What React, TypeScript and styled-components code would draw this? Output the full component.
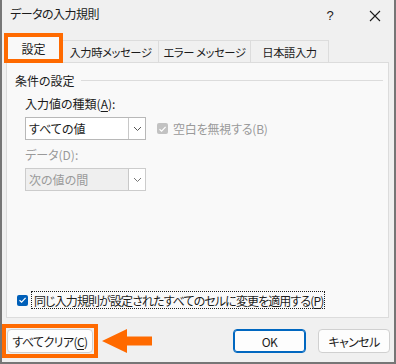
import React from "react";
import styled, { createGlobalStyle } from "styled-components";

const Global = createGlobalStyle`
  html, body { margin: 0; padding: 0; background: #f0f0f0; }
  body {
    font-family: "Noto Sans CJK JP", "Noto Sans", sans-serif;
    font-size: 12px;
    font-feature-settings: "palt";
    color: #1b1b1b;
  }
  * { box-sizing: border-box; }
`;

const Window = styled.div`
  width: 396px;
  height: 364px;
  background: #f0f0f0;
  border: 2px solid #767676;
  border-top: none;
  display: flex;
  flex-direction: column;
`;

const TitleBar = styled.div`
  height: 33px;
  display: flex;
  align-items: flex-start;
  padding: 6px 0 0 8px;
  line-height: 16px;
`;

const Title = styled.div`
  flex: 1;
  font-size: 12px;
  letter-spacing: -0.5px;
`;

const TitleButton = styled.div<{ $w: number }>`
  width: ${(p) => p.$w}px;
  height: 20px;
  display: flex;
  align-items: center;
  justify-content: center;
  color: #1b1b1b;
`;

const Help = styled.span`
  font-family: "Liberation Sans", sans-serif;
  font-size: 13px;
`;

const Gap = styled.div<{ $w: number }>`
  width: ${(p) => p.$w}px;
  flex: none;
`;

const TabRow = styled.div`
  display: flex;
  align-items: flex-end;
  height: 29px;
  padding-left: 2px;
  position: relative;
  z-index: 1;
`;

const Tab = styled.div<{ $w: number }>`
  width: ${(p) => p.$w}px;
  height: 22px;
  border: 1px solid #dcdcdc;
  border-bottom: none;
  border-left: none;
  display: flex;
  align-items: center;
  justify-content: center;
  background: #f0f0f0;
  white-space: nowrap;
  font-size: 11.3px;
  letter-spacing: -0.4px;
`;

const ActiveTab = styled.div`
  width: 59px;
  height: 30px;
  margin-bottom: -1px;
  border: 4px solid #ff6a00;
  background: #f9f9f9;
  display: flex;
  align-items: center;
  justify-content: center;
`;

const Panel = styled.div`
  margin: 0 5px 0 4px;
  height: 256px;
  background: #f9f9f9;
  border: 1px solid #dcdcdc;
  display: flex;
  flex-direction: column;
  padding: 9px 5px 8px 8px;
`;

const GroupHead = styled.div`
  display: flex;
  align-items: center;
  height: 16px;
`;

const GroupLine = styled.div`
  flex: 1;
  height: 1px;
  background: #dcdcdc;
  margin-left: 6px;
`;

const Content = styled.div`
  padding-left: 10px;
  display: flex;
  flex-direction: column;
`;

const FieldLabel = styled.div<{ $disabled?: boolean; $top: number }>`
  margin-top: ${(p) => p.$top}px;
  height: 14px;
  line-height: 14px;
  color: ${(p) => (p.$disabled ? "#9a9a9a" : "#1b1b1b")};
`;

const Row = styled.div<{ $top: number }>`
  margin-top: ${(p) => p.$top}px;
  display: flex;
  align-items: center;
`;

const Combo = styled.div<{ $disabled?: boolean }>`
  width: 121px;
  height: 23px;
  border: 1px solid ${(p) => (p.$disabled ? "#cccccc" : "#b8b8b8")};
  background: ${(p) => (p.$disabled ? "#efefef" : "#ffffff")};
  display: flex;
  color: ${(p) => (p.$disabled ? "#9a9a9a" : "#1b1b1b")};
`;

const ComboText = styled.div`
  flex: 1;
  padding-left: 3px;
  display: flex;
  align-items: center;
`;

const ComboButton = styled.div`
  width: 17px;
  border-left: 1px solid #c8c8c8;
  background: #ffffff;
  display: flex;
  align-items: center;
  justify-content: center;
`;

const Check = styled.div<{ $color: string; $left?: number }>`
  width: 11px;
  height: 11px;
  margin-left: ${(p) => p.$left ?? 0}px;
  border-radius: 2px;
  background: ${(p) => p.$color};
  display: flex;
  align-items: center;
  justify-content: center;
  flex: none;
`;

const CheckLabel = styled.div<{ $disabled?: boolean; $gap: number }>`
  margin-left: ${(p) => p.$gap}px;
  color: ${(p) => (p.$disabled ? "#9a9a9a" : "#1b1b1b")};
  white-space: nowrap;
  letter-spacing: -0.2px;
`;

const Spacer = styled.div`
  flex: 1;
`;

const ApplyRow = styled.div`
  display: flex;
  align-items: center;
  padding-left: 2px;
`;

const Focus = styled.div`
  margin-left: 3px;
  height: 18px;
  padding: 0 1px 0 2px;
  border: 1px dotted #1b1b1b;
  display: flex;
  align-items: center;
  white-space: nowrap;
  letter-spacing: -0.9px;
`;

const Footer = styled.div`
  display: flex;
  align-items: center;
  margin-top: 6px;
  padding-right: 4px;
`;

const Highlight = styled.div`
  border: 4px solid #ff6a00;
  padding: 1px;
  background: #f0f0f0;
`;

const Button = styled.div<{ $w: number; $primary?: boolean }>`
  width: ${(p) => p.$w}px;
  height: 24px;
  border-radius: 4px;
  background: #fdfdfd;
  border: 1px solid ${(p) => (p.$primary ? "#0067c0" : "#d0d0d0")};
  box-shadow: ${(p) => (p.$primary ? "inset 0 0 0 1px #0067c0" : "none")};
  display: flex;
  align-items: center;
  justify-content: center;
  white-space: nowrap;
  letter-spacing: -0.6px;
`;

const ArrowBox = styled.div`
  margin-left: 4px;
  display: flex;
  align-items: center;
`;

const U = styled.span`
  text-decoration: underline;
  text-underline-offset: 2px;
`;

const Chevron = ({ color }: { color: string }) => (
  <svg width="9" height="6" viewBox="0 0 9 6">
    <path d="M1 1 L4.5 4.5 L8 1" fill="none" stroke={color} strokeWidth="1" />
  </svg>
);

const Tick = () => (
  <svg width="9" height="8" viewBox="0 0 9 8">
    <path d="M1.5 4.2 L3.6 6.2 L7.6 1.8" fill="none" stroke="#ffffff" strokeWidth="1.2" />
  </svg>
);

export default function App() {
  return (
    <>
      <Global />
      <Window>
        <TitleBar>
          <Title>データの入力規則</Title>
          <TitleButton $w={18}>
            <Help>?</Help>
          </TitleButton>
          <Gap $w={22} />
          <TitleButton $w={28}>
            <svg width="12" height="12" viewBox="0 0 12 12">
              <path d="M1 1 L11 11 M11 1 L1 11" stroke="#1b1b1b" strokeWidth="1.1" />
            </svg>
          </TitleButton>
          <Gap $w={5} />
        </TitleBar>
        <TabRow>
          <ActiveTab>設定</ActiveTab>
          <Tab $w={96}>入力時メッセージ</Tab>
          <Tab $w={92}>エラー メッセージ</Tab>
          <Tab $w={78}>日本語入力</Tab>
        </TabRow>
        <Panel>
          <GroupHead>
            <span>条件の設定</span>
            <GroupLine />
          </GroupHead>
          <Content>
            <FieldLabel $top={9}>
              入力値の種類(<U>A</U>):
            </FieldLabel>
            <Row $top={6}>
              <Combo>
                <ComboText>すべての値</ComboText>
                <ComboButton>
                  <Chevron color="#555" />
                </ComboButton>
              </Combo>
              <Check $color="#c2c2c2" $left={11}>
                <Tick />
              </Check>
              <CheckLabel $disabled $gap={5}>
                空白を無視する(B)
              </CheckLabel>
            </Row>
            <FieldLabel $disabled $top={8}>
              データ(D):
            </FieldLabel>
            <Row $top={6}>
              <Combo $disabled>
                <ComboText>次の値の間</ComboText>
                <ComboButton>
                  <Chevron color="#777" />
                </ComboButton>
              </Combo>
            </Row>
          </Content>
          <Spacer />
          <ApplyRow>
            <Check $color="#005fb8">
              <Tick />
            </Check>
            <Focus>
              同じ入力規則が設定されたすべてのセルに変更を適用する(<U>P</U>)
            </Focus>
          </ApplyRow>
        </Panel>
        <Footer>
          <Highlight>
            <Button $w={86}>
              すべてクリア(<U>C</U>)
            </Button>
          </Highlight>
          <ArrowBox>
            <svg width="52" height="24" viewBox="0 0 52 24">
              <path d="M0 12 L25 0 L25 7.5 L50 7.5 L50 16.5 L25 16.5 L25 24 Z" fill="#ff6a00" />
            </svg>
          </ArrowBox>
          <Spacer />
          <Button $w={73} $primary>
            OK
          </Button>
          <Gap $w={12} />
          <Button $w={72}>キャンセル</Button>
        </Footer>
      </Window>
    </>
  );
}
